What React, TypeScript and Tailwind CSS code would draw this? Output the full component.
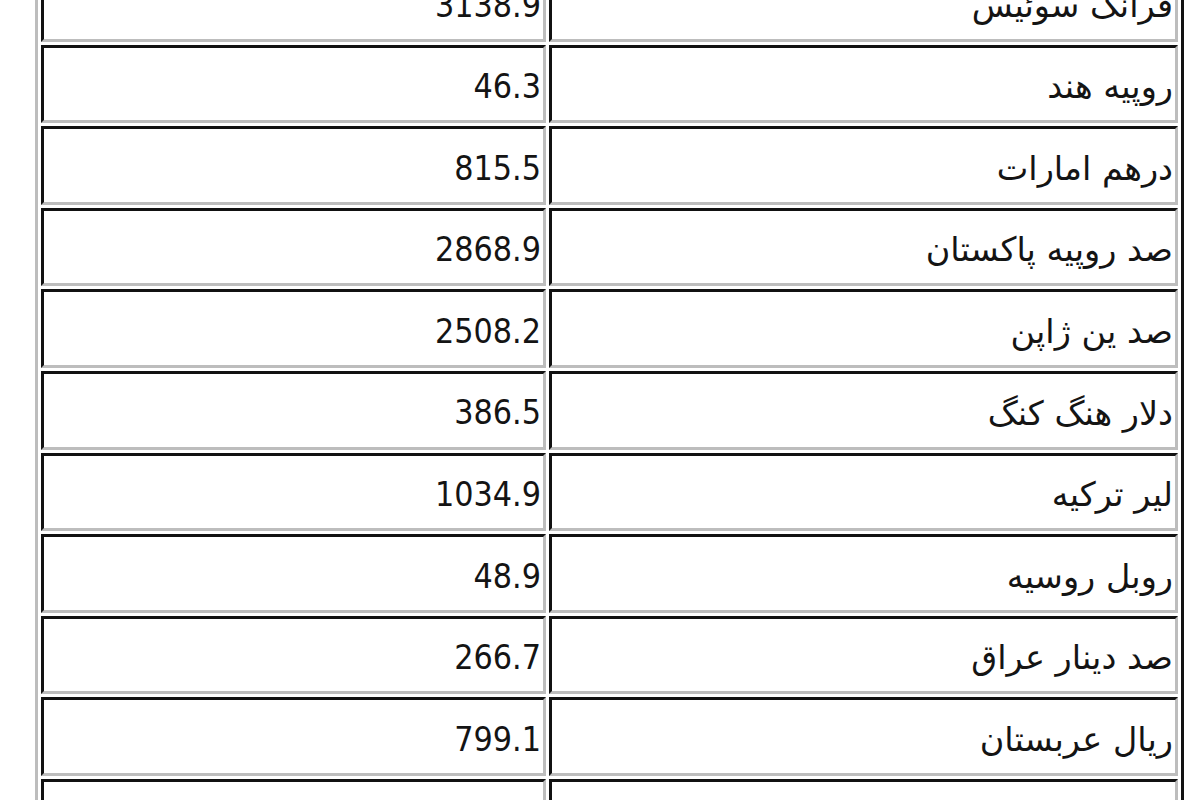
import React from "react";

const rows: [string, string][] = [
  ["3138.9", "فرانک سوئیس"],
  ["46.3", "روپیه هند"],
  ["815.5", "درهم امارات"],
  ["2868.9", "صد روپیه پاکستان"],
  ["2508.2", "صد ین ژاپن"],
  ["386.5", "دلار هنگ کنگ"],
  ["1034.9", "لیر ترکیه"],
  ["48.9", "روبل روسیه"],
  ["266.7", "صد دینار عراق"],
  ["799.1", "ریال عربستان"],
  ["", ""],
];

const cell =
  "h-[78.6px] border-t-[3px] border-l-[3px] border-b-[3px] border-r-[3px] border-t-[#111] border-l-[#111] border-b-[#bdbdbd] border-r-[#bdbdbd] bg-white flex items-center justify-end pr-[2px] pt-[7px] text-[#141414]";

export default function App() {
  return (
    <div className="w-[1200px] h-[800px] overflow-hidden bg-white">
      <div className="ml-[35px] mt-[-40px] w-[1149px] border-l-[3px] border-r-[3px] border-l-[#bdbdbd] border-r-[#111] px-[3px] pt-[3px] flex flex-col gap-[3px]">
        {rows.map(([num, name], i) => (
          <div key={i} className="flex gap-[3px]">
            <div
              className={`${cell} w-[505px] text-[33.7px] font-stretch-condensed`}
              style={{ fontFamily: 'Tahoma, "DejaVu Sans Condensed", "DejaVu Sans", sans-serif' }}
            >
              {num}
            </div>
            <div
              dir="rtl"
              className={`${cell} w-[629px] justify-start text-[33.5px]`}
              style={{ fontFamily: 'Tahoma, "DejaVu Sans", sans-serif' }}
            >
              <span>{name}</span>
            </div>
          </div>
        ))}
      </div>
    </div>
  );
}
